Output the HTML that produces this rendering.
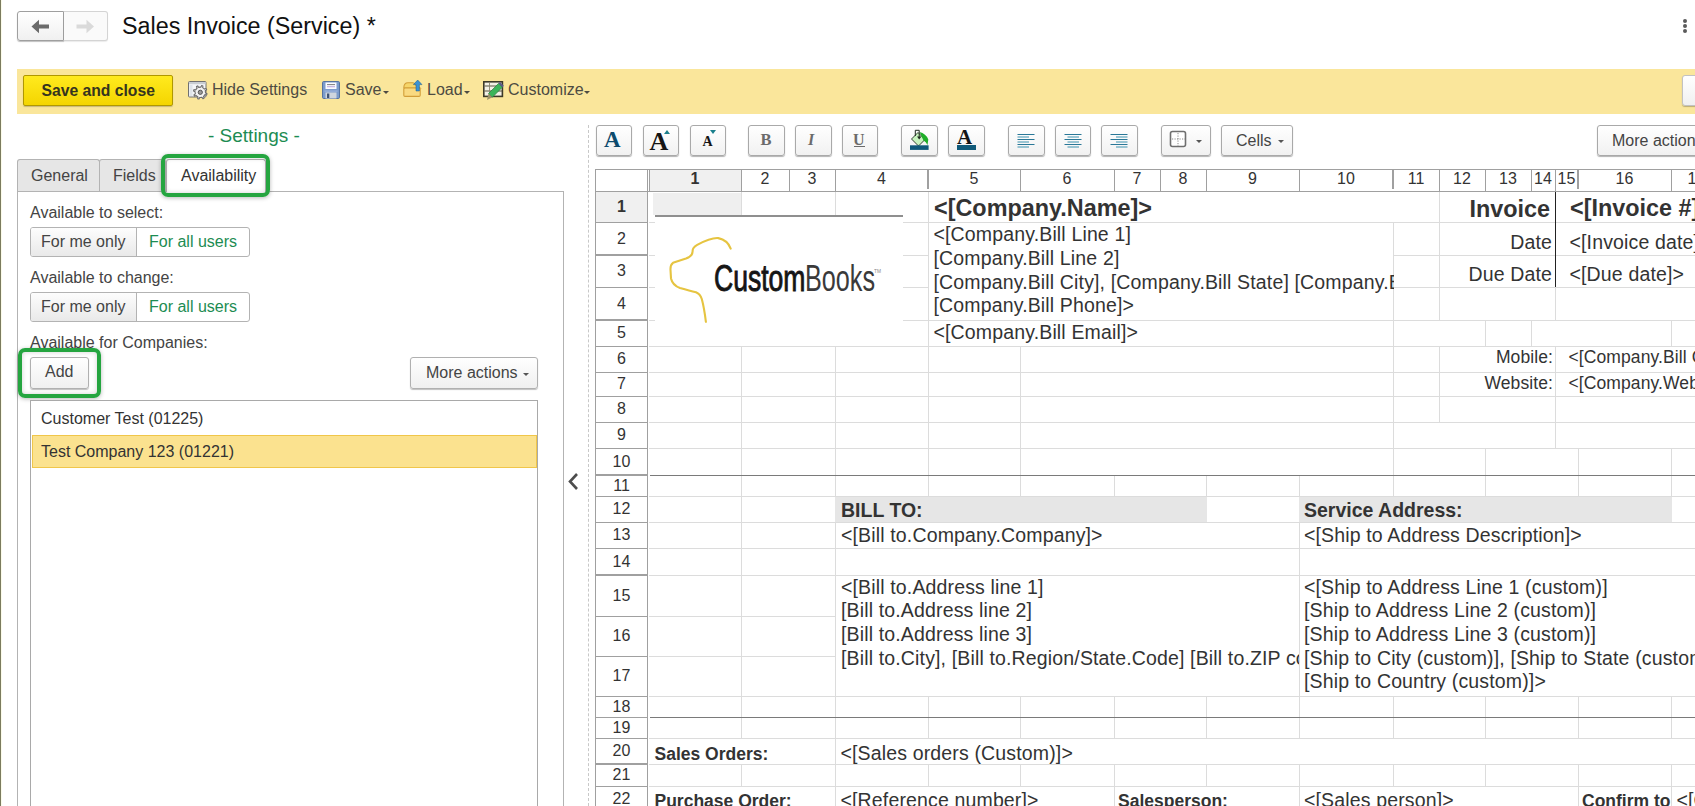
<!DOCTYPE html>
<html><head><meta charset="utf-8">
<style>
html,body{margin:0;padding:0;}
body{width:1695px;height:806px;overflow:hidden;position:relative;background:#fff;font-family:"Liberation Sans",sans-serif;color:#333;}
.a{position:absolute;}
.t{position:absolute;white-space:nowrap;}
.hn{font-size:16px;line-height:21px;text-align:center;color:#333;}
.rn{font-size:16px;text-align:center;color:#333;}
.btn{position:absolute;box-sizing:border-box;border:1px solid #b5b5b5;border-radius:3px;background:linear-gradient(#ffffff,#f0f0f0);box-shadow:0 1px 1px rgba(0,0,0,0.25);}
.tbtn{position:absolute;box-sizing:border-box;top:125px;height:31px;border:1px solid #a9a9a9;border-radius:3px;background:linear-gradient(#ffffff,#f1f1f1);box-shadow:0 1px 1px rgba(0,0,0,0.3);}
.caret{position:absolute;width:0;height:0;border-left:3px solid transparent;border-right:3px solid transparent;border-top:3px solid #555;}
.green{position:absolute;box-sizing:border-box;border:4px solid #25a540;border-radius:7px;box-shadow:0 1px 4px rgba(0,0,0,0.28), inset 0 0 5px rgba(0,0,0,0.18);}
</style></head>
<body>
<!-- left edge -->
<div class="a" style="left:0;top:0;width:1px;height:806px;background:#7b7b5e"></div>
<div class="a" style="left:1px;top:0;width:1px;height:806px;background:#fbfbe9"></div>

<!-- back/forward -->
<div class="btn" style="left:17px;top:11px;width:47px;height:30px;border-color:#9f9f9f;border-radius:3px 0 0 3px;"></div>
<div class="btn" style="left:64px;top:11px;width:44px;height:30px;border-color:#d4d4d4;border-left:none;border-radius:0 3px 3px 0;box-shadow:0 1px 1px rgba(0,0,0,0.08);background:#fafafa"></div>
<svg class="a" style="left:31px;top:19px" width="19" height="15" viewBox="0 0 19 15"><path d="M0.5,7.5 L8,0.8 L8,5.6 L18,5.6 L18,9.4 L8,9.4 L8,14.2 Z" fill="#6b6b6b"/></svg>
<svg class="a" style="left:76px;top:19px" width="19" height="15" viewBox="0 0 19 15"><path d="M18,7.5 L10.5,0.8 L10.5,5.6 L0.5,5.6 L0.5,9.4 L10.5,9.4 L10.5,14.2 Z" fill="#dadada"/></svg>
<div class="t" style="left:122px;top:12.5px;font-size:23.3px;line-height:27px;color:#111">Sales Invoice (Service) *</div>
<!-- kebab -->
<div class="a" style="left:1683px;top:19px;width:4px;height:4px;border-radius:50%;background:#5a5a5a"></div>
<div class="a" style="left:1683px;top:24px;width:4px;height:4px;border-radius:50%;background:#5a5a5a"></div>
<div class="a" style="left:1683px;top:29px;width:4px;height:4px;border-radius:50%;background:#5a5a5a"></div>

<!-- yellow command bar -->
<div class="a" style="left:17px;top:69px;width:1678px;height:45px;background:#fae69b"></div>
<div class="a" style="left:23px;top:75px;width:150px;height:31px;box-sizing:border-box;border:1px solid #b09800;border-radius:2px;background:linear-gradient(#ffea1e,#f4d500);box-shadow:0 1px 1px rgba(0,0,0,0.2)"></div>
<div class="t" style="left:41.5px;top:80.5px;font-size:15.7px;line-height:19px;font-weight:bold;color:#35341f">Save and close</div>
<!-- hide settings icon -->
<svg class="a" style="left:184px;top:76px" width="30" height="28" viewBox="184 76 30 28">
<rect x="188.5" y="81.5" width="17.5" height="15.5" rx="1" fill="#f4f6f8" stroke="#707070" stroke-width="1"/>
<rect x="189" y="82" width="16.5" height="2.2" fill="#c9ced3"/>
<rect x="189.5" y="85" width="3" height="11" fill="#dfe4ea"/>
<path d="M205.50,92.30 L205.46,92.91 L207.07,93.65 L206.67,94.94 L204.93,94.66 L203.98,95.98 L203.98,95.98 L203.52,96.38 L204.13,98.04 L202.94,98.67 L201.91,97.25 L200.30,97.50 L200.30,97.50 L199.69,97.46 L198.95,99.07 L197.66,98.67 L197.94,96.93 L196.62,95.98 L196.62,95.98 L196.22,95.52 L194.56,96.13 L193.93,94.94 L195.35,93.91 L195.10,92.30 L195.10,92.30 L195.14,91.69 L193.53,90.95 L193.93,89.66 L195.67,89.94 L196.62,88.62 L196.62,88.62 L197.08,88.22 L196.47,86.56 L197.66,85.93 L198.69,87.35 L200.30,87.10 L200.30,87.10 L200.91,87.14 L201.65,85.53 L202.94,85.93 L202.66,87.67 L203.98,88.62 L203.98,88.62 L204.38,89.08 L206.04,88.47 L206.67,89.66 L205.25,90.69 L205.50,92.30 Z" fill="#f2f2f2" stroke="#6c6c6c" stroke-width="1.1" stroke-linejoin="round"/>
<circle cx="200.3" cy="92.3" r="2.1" fill="#9a9a9a" stroke="#555" stroke-width="1"/>
</svg>
<div class="t" style="left:212px;top:80px;font-size:16px;line-height:19px;color:#4d4b42">Hide Settings</div>
<!-- save icon -->
<svg class="a" style="left:318px;top:76px" width="30" height="28" viewBox="318 76 30 28">
<rect x="322.5" y="81.5" width="17" height="17" rx="1.2" fill="#7b9bcb" stroke="#56739f" stroke-width="1"/>
<rect x="325.5" y="82.5" width="11" height="6.5" fill="#fbfcff"/>
<rect x="327" y="84.2" width="8" height="0.9" fill="#6d6d6d"/>
<rect x="327" y="86.3" width="8" height="0.9" fill="#b59ad6"/>
<rect x="324.5" y="90.5" width="13" height="1.2" fill="#9fb6de"/>
<rect x="325.5" y="92.5" width="11" height="6" fill="#cfd6de"/>
<rect x="327" y="93.5" width="2.3" height="4.5" fill="#3e5275"/>
</svg>
<div class="t" style="left:345px;top:80px;font-size:16px;line-height:19px;color:#4d4b42">Save</div>
<div class="caret" style="left:383px;top:91px;border-top-color:#4d4b42"></div>
<!-- load icon -->
<svg class="a" style="left:398px;top:74px" width="30" height="28" viewBox="398 74 30 28">
<path d="M403.8,88 Q403.8,82.8 408,82.8 L413,82.8 Q414.5,82.8 415.5,85 L420,88 Z" fill="#f6d66a" stroke="#d29e38" stroke-width="1.1"/>
<rect x="403.8" y="88" width="16.4" height="8.4" rx="1.2" fill="#f9da80" stroke="#d29e38" stroke-width="1.1"/>
<path d="M417.7,80 L422,84.6 L419.4,84.6 L419.4,91 L416,91 L416,84.6 L413.4,84.6 Z" fill="#3b93d4" stroke="#1f5a85" stroke-width="0.5"/>
</svg>
<div class="t" style="left:427px;top:80px;font-size:16px;line-height:19px;color:#4d4b42">Load</div>
<div class="caret" style="left:464px;top:91px;border-top-color:#4d4b42"></div>
<!-- customize icon -->
<svg class="a" style="left:479px;top:76px" width="30" height="28" viewBox="479 76 30 28">
<rect x="483.8" y="81.8" width="18.6" height="14.6" fill="#f3f1e6" stroke="#3d3a28" stroke-width="1.6"/>
<path d="M484.5,86h17.5M484.5,91h17.5" stroke="#5a5640" stroke-width="1.2"/>
<path d="M489.5,82.5v13.5" stroke="#8a8670" stroke-width="0.9"/>
<path d="M488.5,93.5 L498.5,83.5 L502.3,87.3 L492.3,97.3 Z" fill="#3cb45a" stroke="#2d7a3f" stroke-width="0.7"/>
<path d="M498.5,83.5 L500,82 L503.8,85.8 L502.3,87.3 Z" fill="#5b5a86"/>
<path d="M488.5,93.5 L487,100 L492.3,97.3 Z" fill="#9b916a"/>
</svg>
<div class="t" style="left:508px;top:80px;font-size:16px;line-height:19px;color:#4d4b42">Customize</div>
<div class="caret" style="left:584px;top:91px;border-top-color:#4d4b42"></div>
<!-- right button in bar -->
<div class="btn" style="left:1682px;top:75px;width:30px;height:31px;border-color:#c2c2c2"></div>

<!-- Settings heading -->
<div class="t" style="left:208px;top:125px;font-size:19px;line-height:21px;color:#1c8c52">- Settings -</div>

<!-- tabs -->
<div class="a" style="left:17px;top:191px;width:547px;height:615px;box-sizing:border-box;border:1px solid #b3b3b3;border-bottom:none;background:#fff"></div>
<div class="a" style="left:17px;top:159px;width:83px;height:32px;box-sizing:border-box;border:1px solid #b3b3b3;border-bottom:none;border-radius:3px 3px 0 0;background:#e6e6e6"></div>
<div class="a" style="left:99px;top:159px;width:67px;height:32px;box-sizing:border-box;border:1px solid #b3b3b3;border-bottom:none;border-radius:3px 3px 0 0;background:#e6e6e6"></div>
<div class="a" style="left:166px;top:159px;width:100px;height:33px;box-sizing:border-box;border:1px solid #b3b3b3;border-bottom:none;border-radius:3px 3px 0 0;background:#fff"></div>
<div class="t" style="left:31px;top:166px;font-size:16px;line-height:19px;color:#444">General</div>
<div class="t" style="left:113px;top:166px;font-size:16px;line-height:19px;color:#444">Fields</div>
<div class="t" style="left:181px;top:166px;font-size:16px;line-height:19px;color:#333">Availability</div>
<div class="green" style="left:161px;top:154px;width:109px;height:43px;"></div>

<!-- availability form -->
<div class="t" style="left:30px;top:203px;font-size:16px;line-height:19px;color:#444">Available to select:</div>
<div class="a" style="left:30px;top:227px;width:220px;height:30px;box-sizing:border-box;border:1px solid #b3b3b3;border-radius:3px;background:#fff;overflow:hidden">
  <div class="a" style="left:0;top:0;width:105px;height:28px;background:linear-gradient(#fdfdfd,#e9e9e9);border-right:1px solid #b3b3b3"></div>
</div>
<div class="t" style="left:41px;top:232px;font-size:16px;line-height:19px;color:#444">For me only</div>
<div class="t" style="left:149px;top:232px;font-size:16px;line-height:19px;color:#1c8c52">For all users</div>
<div class="t" style="left:30px;top:268px;font-size:16px;line-height:19px;color:#444">Available to change:</div>
<div class="a" style="left:30px;top:292px;width:220px;height:30px;box-sizing:border-box;border:1px solid #b3b3b3;border-radius:3px;background:#fff;overflow:hidden">
  <div class="a" style="left:0;top:0;width:105px;height:28px;background:linear-gradient(#fdfdfd,#e9e9e9);border-right:1px solid #b3b3b3"></div>
</div>
<div class="t" style="left:41px;top:297px;font-size:16px;line-height:19px;color:#444">For me only</div>
<div class="t" style="left:149px;top:297px;font-size:16px;line-height:19px;color:#1c8c52">For all users</div>
<div class="t" style="left:30px;top:333px;font-size:16px;line-height:19px;color:#444">Available for Companies:</div>
<div class="btn" style="left:30px;top:357px;width:59px;height:32px;border-color:#b0b0b0"></div>
<div class="t" style="left:45px;top:362px;font-size:16px;line-height:19px;color:#444">Add</div>
<div class="green" style="left:18px;top:348px;width:83px;height:50px;"></div>
<div class="btn" style="left:410px;top:357px;width:128px;height:32px;border-color:#b0b0b0"></div>
<div class="t" style="left:426px;top:363px;font-size:16px;line-height:19px;color:#444">More actions</div>
<div class="caret" style="left:523px;top:373px"></div>
<!-- list -->
<div class="a" style="left:30px;top:400px;width:508px;height:420px;box-sizing:border-box;border:1px solid #a9a9a9;background:#fff"></div>
<div class="t" style="left:41px;top:409px;font-size:16px;line-height:19px;color:#333">Customer Test (01225)</div>
<div class="a" style="left:32px;top:435px;width:505px;height:33px;box-sizing:border-box;border:1px solid #f0c64a;background:#fbe28f"></div>
<div class="t" style="left:41px;top:442px;font-size:16px;line-height:19px;color:#333">Test Company 123 (01221)</div>

<!-- splitter -->
<svg class="a" style="left:566px;top:471px" width="16" height="21" viewBox="0 0 16 21"><path d="M11,3 L4,10.5 L11,18" fill="none" stroke="#4d4d4d" stroke-width="2.6"/></svg>
<div class="a" style="left:588px;top:125px;width:0;height:681px;border-left:1px dashed #c8c8c8"></div>

<!-- spreadsheet toolbar -->
<div class="tbtn" style="left:596px;width:36px"></div>
<div class="t" style="left:604px;top:126px;font-family:'Liberation Serif',serif;font-weight:bold;font-size:23px;line-height:27px;color:#0d4b6e">A</div>
<div class="tbtn" style="left:643px;width:36px"></div>
<div class="t" style="left:649.5px;top:127px;font-family:'Liberation Serif',serif;font-weight:bold;font-size:26px;line-height:29px;color:#151515">A</div>
<div class="a" style="left:664px;top:130px;width:0;height:0;border-left:3px solid transparent;border-right:3px solid transparent;border-bottom:4px solid #1a7f8c"></div>
<div class="tbtn" style="left:690px;width:36px"></div>
<div class="t" style="left:702.5px;top:132.5px;font-family:'Liberation Serif',serif;font-weight:bold;font-size:14px;line-height:17px;color:#151515">A</div>
<div class="a" style="left:710px;top:130px;width:0;height:0;border-left:3.5px solid transparent;border-right:3.5px solid transparent;border-top:4px solid #1a7f8c"></div>

<div class="tbtn" style="left:748px;width:37px"></div>
<div class="t" style="left:760.5px;top:130px;font-family:'Liberation Serif',serif;font-weight:bold;font-size:16.5px;line-height:19px;color:#6b6b6b">B</div>
<div class="tbtn" style="left:795px;width:37px"></div>
<div class="t" style="left:808px;top:130px;font-family:'Liberation Serif',serif;font-weight:bold;font-style:italic;font-size:16px;line-height:19px;color:#6b6b6b">I</div>
<div class="tbtn" style="left:842px;width:36px"></div>
<div class="t" style="left:853px;top:130px;font-family:'Liberation Serif',serif;font-weight:bold;font-size:16px;line-height:19px;color:#6b6b6b">U</div>
<div class="a" style="left:854px;top:146px;width:11px;height:1px;background:#6b6b6b"></div>

<div class="tbtn" style="left:901px;width:37px"></div>
<svg class="a" style="left:900px;top:125px" width="40" height="31" viewBox="900 125 40 31">
<path d="M911.5,139 L918,132.5 L925,139.5 L918.5,146 Z" fill="#c6f3bd" stroke="#1e2a1e" stroke-width="0.9"/>
<path d="M919.5,132 Q926,133.5 928.3,139.5 L927.5,145 Q926,141.5 923.5,140.5 Z" fill="#1fae28"/>
<path d="M915.3,136 V130.3 H919.2 V138" fill="none" stroke="#1e2a1e" stroke-width="1"/>
<path d="M917,136.5 L921.4,136.5 L919.2,139.5 Z" fill="#1e2a1e"/>
<rect x="910" y="145.3" width="18.6" height="4.6" fill="#0f5a7a"/>
</svg>
<div class="tbtn" style="left:948px;width:37px"></div>
<div class="t" style="left:957px;top:125px;font-family:'Liberation Serif',serif;font-weight:bold;font-size:21px;line-height:24px;color:#151515">A</div>
<div class="a" style="left:957px;top:145px;width:19px;height:5px;background:#0f5a7a"></div>

<div class="tbtn" style="left:1008px;width:37px"></div>
<svg class="a" style="left:1016px;top:133px" width="20" height="15" viewBox="0 0 20 15">
<g stroke="#2a7898" stroke-width="1.1"><path d="M1.5,1.5h17M1.5,6.5h17M1.5,11.5h17"/><path d="M1.5,4h11.5M1.5,9h11.5M1.5,14h11.5" stroke="#3f93b0"/></g></svg>
<div class="tbtn" style="left:1055px;width:36px"></div>
<svg class="a" style="left:1063px;top:133px" width="20" height="15" viewBox="0 0 20 15">
<g stroke="#2a7898" stroke-width="1.1"><path d="M1.5,1.5h17M1.5,6.5h17M1.5,11.5h17"/><path d="M4.5,4h11.5M4.5,9h11.5M4.5,14h11.5" stroke="#3f93b0"/></g></svg>
<div class="tbtn" style="left:1101px;width:37px"></div>
<svg class="a" style="left:1109px;top:133px" width="20" height="15" viewBox="0 0 20 15">
<g stroke="#2a7898" stroke-width="1.1"><path d="M1.5,1.5h17M1.5,6.5h17M1.5,11.5h17"/><path d="M7,4h11.5M7,9h11.5M7,14h11.5" stroke="#3f93b0"/></g></svg>

<div class="tbtn" style="left:1161px;width:50px"></div>
<svg class="a" style="left:1169px;top:130px" width="19" height="19" viewBox="0 0 19 19">
<rect x="1.5" y="1.5" width="15" height="15" rx="2" fill="#fff" stroke="#6f6f6f" stroke-width="1.6"/>
<path d="M9,3v13M3,9h13" stroke="#8a8a8a" stroke-width="1" stroke-dasharray="1.2,1.3"/></svg>
<div class="caret" style="left:1196px;top:140px"></div>
<div class="tbtn" style="left:1221px;width:72px"></div>
<div class="t" style="left:1236px;top:131px;font-size:16px;line-height:19px;color:#444">Cells</div>
<div class="caret" style="left:1278px;top:140px"></div>

<div class="tbtn" style="left:1597px;width:120px"></div>
<div class="t" style="left:1612px;top:131px;font-size:16px;line-height:19px;color:#444">More actions</div>

<!-- spreadsheet -->
<div class="a" style="left:596px;top:170px;width:1099px;height:636px;background:#fff"></div>
<div style="position:absolute;left:741px;top:191px;width:1px;height:31px;background:#dcdcdc"></div>
<div style="position:absolute;left:835px;top:191px;width:1px;height:31px;background:#dcdcdc"></div>
<div style="position:absolute;left:928px;top:191px;width:1px;height:31px;background:#dcdcdc"></div>
<div style="position:absolute;left:1439px;top:191px;width:1px;height:31px;background:#dcdcdc"></div>
<div style="position:absolute;left:928px;top:222px;width:1px;height:33px;background:#dcdcdc"></div>
<div style="position:absolute;left:1393px;top:222px;width:1px;height:33px;background:#dcdcdc"></div>
<div style="position:absolute;left:1439px;top:222px;width:1px;height:33px;background:#dcdcdc"></div>
<div style="position:absolute;left:928px;top:255px;width:1px;height:32px;background:#dcdcdc"></div>
<div style="position:absolute;left:1393px;top:255px;width:1px;height:32px;background:#dcdcdc"></div>
<div style="position:absolute;left:1439px;top:255px;width:1px;height:32px;background:#dcdcdc"></div>
<div style="position:absolute;left:928px;top:287px;width:1px;height:33px;background:#dcdcdc"></div>
<div style="position:absolute;left:1393px;top:287px;width:1px;height:33px;background:#dcdcdc"></div>
<div style="position:absolute;left:1439px;top:287px;width:1px;height:33px;background:#dcdcdc"></div>
<div style="position:absolute;left:1555px;top:287px;width:1px;height:33px;background:#dcdcdc"></div>
<div style="position:absolute;left:928px;top:320px;width:1px;height:26px;background:#dcdcdc"></div>
<div style="position:absolute;left:1393px;top:320px;width:1px;height:26px;background:#dcdcdc"></div>
<div style="position:absolute;left:1485px;top:320px;width:1px;height:26px;background:#dcdcdc"></div>
<div style="position:absolute;left:1531px;top:320px;width:1px;height:26px;background:#dcdcdc"></div>
<div style="position:absolute;left:1671px;top:320px;width:1px;height:26px;background:#dcdcdc"></div>
<div style="position:absolute;left:741px;top:346px;width:1px;height:26px;background:#dcdcdc"></div>
<div style="position:absolute;left:835px;top:346px;width:1px;height:26px;background:#dcdcdc"></div>
<div style="position:absolute;left:928px;top:346px;width:1px;height:26px;background:#dcdcdc"></div>
<div style="position:absolute;left:1020px;top:346px;width:1px;height:26px;background:#dcdcdc"></div>
<div style="position:absolute;left:1393px;top:346px;width:1px;height:26px;background:#dcdcdc"></div>
<div style="position:absolute;left:1439px;top:346px;width:1px;height:26px;background:#dcdcdc"></div>
<div style="position:absolute;left:1555px;top:346px;width:1px;height:26px;background:#dcdcdc"></div>
<div style="position:absolute;left:741px;top:372px;width:1px;height:24px;background:#dcdcdc"></div>
<div style="position:absolute;left:835px;top:372px;width:1px;height:24px;background:#dcdcdc"></div>
<div style="position:absolute;left:928px;top:372px;width:1px;height:24px;background:#dcdcdc"></div>
<div style="position:absolute;left:1020px;top:372px;width:1px;height:24px;background:#dcdcdc"></div>
<div style="position:absolute;left:1393px;top:372px;width:1px;height:24px;background:#dcdcdc"></div>
<div style="position:absolute;left:1439px;top:372px;width:1px;height:24px;background:#dcdcdc"></div>
<div style="position:absolute;left:1555px;top:372px;width:1px;height:24px;background:#dcdcdc"></div>
<div style="position:absolute;left:741px;top:396px;width:1px;height:26px;background:#dcdcdc"></div>
<div style="position:absolute;left:835px;top:396px;width:1px;height:26px;background:#dcdcdc"></div>
<div style="position:absolute;left:928px;top:396px;width:1px;height:26px;background:#dcdcdc"></div>
<div style="position:absolute;left:1020px;top:396px;width:1px;height:26px;background:#dcdcdc"></div>
<div style="position:absolute;left:1393px;top:396px;width:1px;height:26px;background:#dcdcdc"></div>
<div style="position:absolute;left:1439px;top:396px;width:1px;height:26px;background:#dcdcdc"></div>
<div style="position:absolute;left:1555px;top:396px;width:1px;height:26px;background:#dcdcdc"></div>
<div style="position:absolute;left:741px;top:422px;width:1px;height:26px;background:#dcdcdc"></div>
<div style="position:absolute;left:835px;top:422px;width:1px;height:26px;background:#dcdcdc"></div>
<div style="position:absolute;left:928px;top:422px;width:1px;height:26px;background:#dcdcdc"></div>
<div style="position:absolute;left:1020px;top:422px;width:1px;height:26px;background:#dcdcdc"></div>
<div style="position:absolute;left:1393px;top:422px;width:1px;height:26px;background:#dcdcdc"></div>
<div style="position:absolute;left:1555px;top:422px;width:1px;height:26px;background:#dcdcdc"></div>
<div style="position:absolute;left:741px;top:448px;width:1px;height:27px;background:#dcdcdc"></div>
<div style="position:absolute;left:835px;top:448px;width:1px;height:27px;background:#dcdcdc"></div>
<div style="position:absolute;left:928px;top:448px;width:1px;height:27px;background:#dcdcdc"></div>
<div style="position:absolute;left:1020px;top:448px;width:1px;height:27px;background:#dcdcdc"></div>
<div style="position:absolute;left:1393px;top:448px;width:1px;height:27px;background:#dcdcdc"></div>
<div style="position:absolute;left:1485px;top:448px;width:1px;height:27px;background:#dcdcdc"></div>
<div style="position:absolute;left:1578px;top:448px;width:1px;height:27px;background:#dcdcdc"></div>
<div style="position:absolute;left:1671px;top:448px;width:1px;height:27px;background:#dcdcdc"></div>
<div style="position:absolute;left:741px;top:475px;width:1px;height:21px;background:#dcdcdc"></div>
<div style="position:absolute;left:835px;top:475px;width:1px;height:21px;background:#dcdcdc"></div>
<div style="position:absolute;left:928px;top:475px;width:1px;height:21px;background:#dcdcdc"></div>
<div style="position:absolute;left:1020px;top:475px;width:1px;height:21px;background:#dcdcdc"></div>
<div style="position:absolute;left:1114px;top:475px;width:1px;height:21px;background:#dcdcdc"></div>
<div style="position:absolute;left:1206px;top:475px;width:1px;height:21px;background:#dcdcdc"></div>
<div style="position:absolute;left:1299px;top:475px;width:1px;height:21px;background:#dcdcdc"></div>
<div style="position:absolute;left:1393px;top:475px;width:1px;height:21px;background:#dcdcdc"></div>
<div style="position:absolute;left:1485px;top:475px;width:1px;height:21px;background:#dcdcdc"></div>
<div style="position:absolute;left:1578px;top:475px;width:1px;height:21px;background:#dcdcdc"></div>
<div style="position:absolute;left:1671px;top:475px;width:1px;height:21px;background:#dcdcdc"></div>
<div style="position:absolute;left:741px;top:496px;width:1px;height:26px;background:#dcdcdc"></div>
<div style="position:absolute;left:835px;top:496px;width:1px;height:26px;background:#dcdcdc"></div>
<div style="position:absolute;left:1299px;top:496px;width:1px;height:26px;background:#dcdcdc"></div>
<div style="position:absolute;left:741px;top:522px;width:1px;height:26px;background:#dcdcdc"></div>
<div style="position:absolute;left:835px;top:522px;width:1px;height:26px;background:#dcdcdc"></div>
<div style="position:absolute;left:1299px;top:522px;width:1px;height:26px;background:#dcdcdc"></div>
<div style="position:absolute;left:741px;top:548px;width:1px;height:27px;background:#dcdcdc"></div>
<div style="position:absolute;left:835px;top:548px;width:1px;height:27px;background:#dcdcdc"></div>
<div style="position:absolute;left:1299px;top:548px;width:1px;height:27px;background:#dcdcdc"></div>
<div style="position:absolute;left:741px;top:575px;width:1px;height:41px;background:#dcdcdc"></div>
<div style="position:absolute;left:835px;top:575px;width:1px;height:41px;background:#dcdcdc"></div>
<div style="position:absolute;left:1299px;top:575px;width:1px;height:41px;background:#dcdcdc"></div>
<div style="position:absolute;left:741px;top:616px;width:1px;height:40px;background:#dcdcdc"></div>
<div style="position:absolute;left:835px;top:616px;width:1px;height:40px;background:#dcdcdc"></div>
<div style="position:absolute;left:1299px;top:616px;width:1px;height:40px;background:#dcdcdc"></div>
<div style="position:absolute;left:741px;top:656px;width:1px;height:40px;background:#dcdcdc"></div>
<div style="position:absolute;left:835px;top:656px;width:1px;height:40px;background:#dcdcdc"></div>
<div style="position:absolute;left:1299px;top:656px;width:1px;height:40px;background:#dcdcdc"></div>
<div style="position:absolute;left:741px;top:696px;width:1px;height:21px;background:#dcdcdc"></div>
<div style="position:absolute;left:835px;top:696px;width:1px;height:21px;background:#dcdcdc"></div>
<div style="position:absolute;left:928px;top:696px;width:1px;height:21px;background:#dcdcdc"></div>
<div style="position:absolute;left:1020px;top:696px;width:1px;height:21px;background:#dcdcdc"></div>
<div style="position:absolute;left:1114px;top:696px;width:1px;height:21px;background:#dcdcdc"></div>
<div style="position:absolute;left:1206px;top:696px;width:1px;height:21px;background:#dcdcdc"></div>
<div style="position:absolute;left:1299px;top:696px;width:1px;height:21px;background:#dcdcdc"></div>
<div style="position:absolute;left:1393px;top:696px;width:1px;height:21px;background:#dcdcdc"></div>
<div style="position:absolute;left:1485px;top:696px;width:1px;height:21px;background:#dcdcdc"></div>
<div style="position:absolute;left:1578px;top:696px;width:1px;height:21px;background:#dcdcdc"></div>
<div style="position:absolute;left:1671px;top:696px;width:1px;height:21px;background:#dcdcdc"></div>
<div style="position:absolute;left:741px;top:717px;width:1px;height:21px;background:#dcdcdc"></div>
<div style="position:absolute;left:835px;top:717px;width:1px;height:21px;background:#dcdcdc"></div>
<div style="position:absolute;left:928px;top:717px;width:1px;height:21px;background:#dcdcdc"></div>
<div style="position:absolute;left:1020px;top:717px;width:1px;height:21px;background:#dcdcdc"></div>
<div style="position:absolute;left:1114px;top:717px;width:1px;height:21px;background:#dcdcdc"></div>
<div style="position:absolute;left:1206px;top:717px;width:1px;height:21px;background:#dcdcdc"></div>
<div style="position:absolute;left:1299px;top:717px;width:1px;height:21px;background:#dcdcdc"></div>
<div style="position:absolute;left:1393px;top:717px;width:1px;height:21px;background:#dcdcdc"></div>
<div style="position:absolute;left:1485px;top:717px;width:1px;height:21px;background:#dcdcdc"></div>
<div style="position:absolute;left:1578px;top:717px;width:1px;height:21px;background:#dcdcdc"></div>
<div style="position:absolute;left:1671px;top:717px;width:1px;height:21px;background:#dcdcdc"></div>
<div style="position:absolute;left:835px;top:738px;width:1px;height:26px;background:#dcdcdc"></div>
<div style="position:absolute;left:741px;top:764px;width:1px;height:22px;background:#dcdcdc"></div>
<div style="position:absolute;left:835px;top:764px;width:1px;height:22px;background:#dcdcdc"></div>
<div style="position:absolute;left:928px;top:764px;width:1px;height:22px;background:#dcdcdc"></div>
<div style="position:absolute;left:1020px;top:764px;width:1px;height:22px;background:#dcdcdc"></div>
<div style="position:absolute;left:1114px;top:764px;width:1px;height:22px;background:#dcdcdc"></div>
<div style="position:absolute;left:1206px;top:764px;width:1px;height:22px;background:#dcdcdc"></div>
<div style="position:absolute;left:1299px;top:764px;width:1px;height:22px;background:#dcdcdc"></div>
<div style="position:absolute;left:1393px;top:764px;width:1px;height:22px;background:#dcdcdc"></div>
<div style="position:absolute;left:1485px;top:764px;width:1px;height:22px;background:#dcdcdc"></div>
<div style="position:absolute;left:1578px;top:764px;width:1px;height:22px;background:#dcdcdc"></div>
<div style="position:absolute;left:1671px;top:764px;width:1px;height:22px;background:#dcdcdc"></div>
<div style="position:absolute;left:835px;top:786px;width:1px;height:26px;background:#dcdcdc"></div>
<div style="position:absolute;left:1114px;top:786px;width:1px;height:26px;background:#dcdcdc"></div>
<div style="position:absolute;left:1299px;top:786px;width:1px;height:26px;background:#dcdcdc"></div>
<div style="position:absolute;left:1578px;top:786px;width:1px;height:26px;background:#dcdcdc"></div>
<div style="position:absolute;left:1671px;top:786px;width:1px;height:26px;background:#dcdcdc"></div>
<div style="position:absolute;left:649px;top:222px;width:1046px;height:1px;background:#dcdcdc"></div>
<div style="position:absolute;left:649px;top:255px;width:279px;height:1px;background:#dcdcdc"></div>
<div style="position:absolute;left:1393px;top:255px;width:302px;height:1px;background:#dcdcdc"></div>
<div style="position:absolute;left:649px;top:287px;width:279px;height:1px;background:#dcdcdc"></div>
<div style="position:absolute;left:1393px;top:287px;width:302px;height:1px;background:#dcdcdc"></div>
<div style="position:absolute;left:649px;top:320px;width:1046px;height:1px;background:#dcdcdc"></div>
<div style="position:absolute;left:649px;top:346px;width:1046px;height:1px;background:#dcdcdc"></div>
<div style="position:absolute;left:649px;top:372px;width:1046px;height:1px;background:#dcdcdc"></div>
<div style="position:absolute;left:649px;top:396px;width:1046px;height:1px;background:#dcdcdc"></div>
<div style="position:absolute;left:649px;top:422px;width:1046px;height:1px;background:#dcdcdc"></div>
<div style="position:absolute;left:649px;top:448px;width:1046px;height:1px;background:#dcdcdc"></div>
<div style="position:absolute;left:649px;top:496px;width:1046px;height:1px;background:#dcdcdc"></div>
<div style="position:absolute;left:649px;top:522px;width:1046px;height:1px;background:#dcdcdc"></div>
<div style="position:absolute;left:649px;top:548px;width:1046px;height:1px;background:#dcdcdc"></div>
<div style="position:absolute;left:649px;top:575px;width:1046px;height:1px;background:#dcdcdc"></div>
<div style="position:absolute;left:649px;top:616px;width:186px;height:1px;background:#dcdcdc"></div>
<div style="position:absolute;left:649px;top:656px;width:186px;height:1px;background:#dcdcdc"></div>
<div style="position:absolute;left:649px;top:696px;width:1046px;height:1px;background:#dcdcdc"></div>
<div style="position:absolute;left:649px;top:738px;width:1046px;height:1px;background:#dcdcdc"></div>
<div style="position:absolute;left:649px;top:764px;width:1046px;height:1px;background:#dcdcdc"></div>
<div style="position:absolute;left:649px;top:786px;width:1046px;height:1px;background:#dcdcdc"></div>
<div style="position:absolute;left:650px;top:475px;width:1045px;height:1px;background:#7a7a7a"></div>
<div style="position:absolute;left:650px;top:717px;width:1045px;height:1px;background:#7a7a7a"></div>
<div style="position:absolute;left:1555px;top:191px;width:1px;height:96px;background:#222"></div>
<div style="position:absolute;left:653px;top:193px;width:88px;height:22px;background:#efefef"></div>
<div style="position:absolute;left:655px;top:216px;width:248px;height:130px;background:#fff"></div>
<div style="position:absolute;left:655px;top:214.5px;width:248px;height:2px;background:#8f8f8f"></div>
<svg style="position:absolute;left:650px;top:230px" width="240" height="100" viewBox="650 230 240 100">
<path d="M730.7,248.6 Q727.5,240 718.3,238.1 Q711,237.5 697.2,244.9 Q692.3,247.5 692.6,251.5 Q692.6,256 686,258.6 L673,262.8 Q670.2,264.8 670.5,270 L671,278.4 Q672.5,285 680,288 Q690,290.8 696,292.2 Q700.2,294 701.8,299 Q704.2,308 705.9,321.8" fill="none" stroke="#e6c441" stroke-width="2.1" stroke-linecap="round" stroke-linejoin="round"/>
</svg>
<div class="t " style="left:713.8px;top:259px;font-size:36px;color:#151515;-webkit-text-stroke:0.9px #151515;transform:scaleX(0.737);transform-origin:0 0;line-height:40px">Custom</div>
<div class="t " style="left:805.4px;top:259px;font-size:36px;color:#3a3a3a;transform:scaleX(0.70);transform-origin:0 0;line-height:40px">Books</div>
<div class="t " style="left:873.5px;top:268px;font-size:6px;color:#888;line-height:7px;transform:scaleX(0.8);transform-origin:0 0">TM</div>
<div style="position:absolute;left:835px;top:497px;width:372px;height:25px;background:#e6e6e6"></div>
<div style="position:absolute;left:1299px;top:497px;width:373px;height:25px;background:#e6e6e6"></div>
<div class="t" style="left:934px;top:195.0px;line-height:26.9px;font-size:23.4px;font-weight:bold;color:#333;">&lt;[Company.Name]&gt;</div>
<div class="t" style="left:1400px;top:195.6px;line-height:26.9px;width:150px;text-align:right;font-size:23.4px;font-weight:bold;color:#333;">Invoice</div>
<div class="t" style="left:1570px;top:195.1px;line-height:26.9px;font-size:23.4px;font-weight:bold;color:#333;">&lt;[Invoice #]&gt;</div>
<div class="t" style="left:933.5px;top:223.2px;line-height:22.4px;font-size:19.5px;color:#333;letter-spacing:0.15px;">&lt;[Company.Bill Line 1]</div>
<div class="t" style="left:933.5px;top:246.8px;line-height:22.4px;font-size:19.5px;color:#333;letter-spacing:0.15px;">[Company.Bill Line 2]</div>
<div class="t" style="left:933.5px;top:270.5px;line-height:22.4px;width:460px;overflow:hidden;font-size:19.5px;color:#333;letter-spacing:0.15px;">[Company.Bill City], [Company.Bill State] [Company.Bill ZIP]</div>
<div class="t" style="left:933.5px;top:294.2px;line-height:22.4px;font-size:19.5px;color:#333;letter-spacing:0.15px;">[Company.Bill Phone]&gt;</div>
<div class="t" style="left:933.5px;top:320.5px;line-height:22.4px;font-size:19.5px;color:#333;letter-spacing:0.15px;">&lt;[Company.Bill Email]&gt;</div>
<div class="t" style="left:1432px;top:231.1px;line-height:22.4px;width:120px;text-align:right;font-size:19.5px;color:#333;letter-spacing:0.15px;">Date</div>
<div class="t" style="left:1432px;top:262.7px;line-height:22.4px;width:120px;text-align:right;font-size:19.5px;color:#333;letter-spacing:0.15px;">Due Date</div>
<div class="t" style="left:1569.5px;top:231.1px;line-height:22.4px;font-size:19.5px;color:#333;letter-spacing:0.15px;">&lt;[Invoice date]&gt;</div>
<div class="t" style="left:1569.5px;top:262.7px;line-height:22.4px;font-size:19.5px;color:#333;letter-spacing:0.15px;">&lt;[Due date]&gt;</div>
<div class="t" style="left:1433px;top:347.1px;line-height:20.1px;width:120px;text-align:right;font-size:17.5px;color:#333;letter-spacing:0.1px;">Mobile:</div>
<div class="t" style="left:1433px;top:372.6px;line-height:20.1px;width:120px;text-align:right;font-size:17.5px;color:#333;letter-spacing:0.1px;">Website:</div>
<div class="t" style="left:1568.5px;top:347.1px;line-height:20.1px;font-size:17.5px;color:#333;letter-spacing:0.1px;">&lt;[Company.Bill Cell Phone]&gt;</div>
<div class="t" style="left:1568.5px;top:372.6px;line-height:20.1px;font-size:17.5px;color:#333;letter-spacing:0.1px;">&lt;[Company.Website]&gt;</div>
<div class="t" style="left:841px;top:499.2px;line-height:22.4px;font-size:19.5px;font-weight:bold;color:#333;">BILL TO:</div>
<div class="t" style="left:1304px;top:499.2px;line-height:22.4px;font-size:19.5px;font-weight:bold;color:#333;">Service Address:</div>
<div class="t" style="left:841px;top:524.2px;line-height:22.4px;font-size:19.5px;color:#333;letter-spacing:0.15px;">&lt;[Bill to.Company.Company]&gt;</div>
<div class="t" style="left:1304px;top:524.2px;line-height:22.4px;font-size:19.5px;color:#333;letter-spacing:0.15px;">&lt;[Ship to Address Description]&gt;</div>
<div class="t" style="left:841px;top:575.5px;line-height:22.4px;font-size:19.5px;color:#333;letter-spacing:0.15px;">&lt;[Bill to.Address line 1]</div>
<div class="t" style="left:841px;top:599.2px;line-height:22.4px;font-size:19.5px;color:#333;letter-spacing:0.15px;">[Bill to.Address line 2]</div>
<div class="t" style="left:841px;top:622.9px;line-height:22.4px;font-size:19.5px;color:#333;letter-spacing:0.15px;">[Bill to.Address line 3]</div>
<div class="t" style="left:841px;top:646.6px;line-height:22.4px;width:458px;overflow:hidden;font-size:19.5px;color:#333;letter-spacing:0.15px;">[Bill to.City], [Bill to.Region/State.Code] [Bill to.ZIP code]</div>
<div class="t" style="left:1304px;top:575.5px;line-height:22.4px;font-size:19.5px;color:#333;letter-spacing:0.15px;">&lt;[Ship to Address Line 1 (custom)]</div>
<div class="t" style="left:1304px;top:599.2px;line-height:22.4px;font-size:19.5px;color:#333;letter-spacing:0.15px;">[Ship to Address Line 2 (custom)]</div>
<div class="t" style="left:1304px;top:622.9px;line-height:22.4px;font-size:19.5px;color:#333;letter-spacing:0.15px;">[Ship to Address Line 3 (custom)]</div>
<div class="t" style="left:1304px;top:646.6px;line-height:22.4px;font-size:19.5px;color:#333;letter-spacing:0.15px;">[Ship to City (custom)], [Ship to State (custom)] [Ship to ZIP (custom)]</div>
<div class="t" style="left:1304px;top:670.3px;line-height:22.4px;font-size:19.5px;color:#333;letter-spacing:0.15px;">[Ship to Country (custom)]&gt;</div>
<div class="t" style="left:654.5px;top:743.6px;line-height:20.1px;font-size:17.5px;font-weight:bold;color:#333;">Sales Orders:</div>
<div class="t" style="left:840.5px;top:741.6px;line-height:22.4px;font-size:19.5px;color:#333;letter-spacing:0.15px;">&lt;[Sales orders (Custom)]&gt;</div>
<div class="t" style="left:654.5px;top:790.7px;line-height:20.1px;font-size:17.5px;font-weight:bold;color:#333;">Purchase Order:</div>
<div class="t" style="left:840.5px;top:788.7px;line-height:22.4px;font-size:19.5px;color:#333;letter-spacing:0.15px;">&lt;[Reference number]&gt;</div>
<div class="t" style="left:1118px;top:790.7px;line-height:20.1px;font-size:17.5px;font-weight:bold;color:#333;">Salesperson:</div>
<div class="t" style="left:1304px;top:788.7px;line-height:22.4px;font-size:19.5px;color:#333;letter-spacing:0.15px;">&lt;[Sales person]&gt;</div>
<div class="t" style="left:1582px;top:790.7px;line-height:20.1px;font-size:17.5px;font-weight:bold;color:#333;">Confirm to</div>
<div class="t" style="left:1676.5px;top:788.7px;line-height:22.4px;font-size:19.5px;color:#333;letter-spacing:0.15px;">&lt;[Confirm to]&gt;</div>
<div style="position:absolute;left:595px;top:169px;width:1100px;height:1px;background:#a0a0a0"></div>
<div style="position:absolute;left:595px;top:191px;width:1100px;height:1px;background:#a0a0a0"></div>
<div style="position:absolute;left:595px;top:169px;width:1px;height:637px;background:#a0a0a0"></div>
<div style="position:absolute;left:647px;top:169px;width:1px;height:637px;background:#a0a0a0"></div>
<div style="position:absolute;left:649px;top:169px;width:1px;height:22px;background:#a0a0a0"></div>
<div style="position:absolute;left:650px;top:170px;width:91px;height:21px;background:#f0f0f0"></div>
<div style="position:absolute;left:596px;top:192px;width:51px;height:30px;background:#f0f0f0"></div>
<div style="position:absolute;left:741px;top:170px;width:1px;height:21px;background:#a0a0a0"></div>
<div style="position:absolute;left:789px;top:170px;width:1px;height:21px;background:#a0a0a0"></div>
<div style="position:absolute;left:835px;top:170px;width:1px;height:21px;background:#a0a0a0"></div>
<div style="position:absolute;left:927px;top:170px;width:2px;height:19px;background:#a0a0a0"></div>
<div style="position:absolute;left:1020px;top:170px;width:1px;height:21px;background:#a0a0a0"></div>
<div style="position:absolute;left:1114px;top:170px;width:1px;height:21px;background:#a0a0a0"></div>
<div style="position:absolute;left:1160px;top:170px;width:1px;height:21px;background:#a0a0a0"></div>
<div style="position:absolute;left:1206px;top:170px;width:1px;height:21px;background:#a0a0a0"></div>
<div style="position:absolute;left:1299px;top:170px;width:1px;height:21px;background:#a0a0a0"></div>
<div style="position:absolute;left:1392px;top:170px;width:2px;height:19px;background:#a0a0a0"></div>
<div style="position:absolute;left:1439px;top:170px;width:1px;height:21px;background:#a0a0a0"></div>
<div style="position:absolute;left:1485px;top:170px;width:1px;height:21px;background:#a0a0a0"></div>
<div style="position:absolute;left:1531px;top:170px;width:1px;height:21px;background:#a0a0a0"></div>
<div style="position:absolute;left:1555px;top:170px;width:1px;height:21px;background:#a0a0a0"></div>
<div style="position:absolute;left:1577px;top:170px;width:2px;height:19px;background:#a0a0a0"></div>
<div style="position:absolute;left:1671px;top:170px;width:1px;height:21px;background:#a0a0a0"></div>
<div class="t hn" style="left:649px;top:168px;width:92px;font-weight:bold">1</div>
<div class="t hn" style="left:741px;top:168px;width:48px;font-weight:normal">2</div>
<div class="t hn" style="left:789px;top:168px;width:46px;font-weight:normal">3</div>
<div class="t hn" style="left:835px;top:168px;width:93px;font-weight:normal">4</div>
<div class="t hn" style="left:928px;top:168px;width:92px;font-weight:normal">5</div>
<div class="t hn" style="left:1020px;top:168px;width:94px;font-weight:normal">6</div>
<div class="t hn" style="left:1114px;top:168px;width:46px;font-weight:normal">7</div>
<div class="t hn" style="left:1160px;top:168px;width:46px;font-weight:normal">8</div>
<div class="t hn" style="left:1206px;top:168px;width:93px;font-weight:normal">9</div>
<div class="t hn" style="left:1299px;top:168px;width:94px;font-weight:normal">10</div>
<div class="t hn" style="left:1393px;top:168px;width:46px;font-weight:normal">11</div>
<div class="t hn" style="left:1439px;top:168px;width:46px;font-weight:normal">12</div>
<div class="t hn" style="left:1485px;top:168px;width:46px;font-weight:normal">13</div>
<div class="t hn" style="left:1531px;top:168px;width:24px;font-weight:normal">14</div>
<div class="t hn" style="left:1555px;top:168px;width:23px;font-weight:normal">15</div>
<div class="t hn" style="left:1578px;top:168px;width:93px;font-weight:normal">16</div>
<div class="t hn" style="left:1671px;top:168px;width:51px">17</div>
<div style="position:absolute;left:596px;top:222px;width:51px;height:1px;background:#a0a0a0"></div>
<div class="t rn" style="left:596px;top:191px;width:51px;height:31px;line-height:31px;font-weight:bold">1</div>
<div style="position:absolute;left:596px;top:254px;width:51px;height:2px;background:#a0a0a0"></div>
<div class="t rn" style="left:596px;top:222px;width:51px;height:33px;line-height:33px;font-weight:normal">2</div>
<div style="position:absolute;left:596px;top:287px;width:51px;height:1px;background:#a0a0a0"></div>
<div class="t rn" style="left:596px;top:255px;width:51px;height:32px;line-height:32px;font-weight:normal">3</div>
<div style="position:absolute;left:596px;top:319px;width:51px;height:2px;background:#a0a0a0"></div>
<div class="t rn" style="left:596px;top:287px;width:51px;height:33px;line-height:33px;font-weight:normal">4</div>
<div style="position:absolute;left:596px;top:346px;width:51px;height:1px;background:#a0a0a0"></div>
<div class="t rn" style="left:596px;top:320px;width:51px;height:26px;line-height:26px;font-weight:normal">5</div>
<div style="position:absolute;left:596px;top:372px;width:51px;height:1px;background:#a0a0a0"></div>
<div class="t rn" style="left:596px;top:346px;width:51px;height:26px;line-height:26px;font-weight:normal">6</div>
<div style="position:absolute;left:596px;top:396px;width:51px;height:1px;background:#a0a0a0"></div>
<div class="t rn" style="left:596px;top:372px;width:51px;height:24px;line-height:24px;font-weight:normal">7</div>
<div style="position:absolute;left:596px;top:422px;width:51px;height:1px;background:#a0a0a0"></div>
<div class="t rn" style="left:596px;top:396px;width:51px;height:26px;line-height:26px;font-weight:normal">8</div>
<div style="position:absolute;left:596px;top:448px;width:51px;height:1px;background:#a0a0a0"></div>
<div class="t rn" style="left:596px;top:422px;width:51px;height:26px;line-height:26px;font-weight:normal">9</div>
<div style="position:absolute;left:596px;top:474px;width:51px;height:2px;background:#a0a0a0"></div>
<div class="t rn" style="left:596px;top:448px;width:51px;height:27px;line-height:27px;font-weight:normal">10</div>
<div style="position:absolute;left:596px;top:496px;width:51px;height:1px;background:#a0a0a0"></div>
<div class="t rn" style="left:596px;top:475px;width:51px;height:21px;line-height:21px;font-weight:normal">11</div>
<div style="position:absolute;left:596px;top:522px;width:51px;height:1px;background:#a0a0a0"></div>
<div class="t rn" style="left:596px;top:496px;width:51px;height:26px;line-height:26px;font-weight:normal">12</div>
<div style="position:absolute;left:596px;top:548px;width:51px;height:1px;background:#a0a0a0"></div>
<div class="t rn" style="left:596px;top:522px;width:51px;height:26px;line-height:26px;font-weight:normal">13</div>
<div style="position:absolute;left:596px;top:574px;width:51px;height:2px;background:#a0a0a0"></div>
<div class="t rn" style="left:596px;top:548px;width:51px;height:27px;line-height:27px;font-weight:normal">14</div>
<div style="position:absolute;left:596px;top:616px;width:51px;height:1px;background:#a0a0a0"></div>
<div class="t rn" style="left:596px;top:575px;width:51px;height:41px;line-height:41px;font-weight:normal">15</div>
<div style="position:absolute;left:596px;top:656px;width:51px;height:1px;background:#a0a0a0"></div>
<div class="t rn" style="left:596px;top:616px;width:51px;height:40px;line-height:40px;font-weight:normal">16</div>
<div style="position:absolute;left:596px;top:696px;width:51px;height:1px;background:#a0a0a0"></div>
<div class="t rn" style="left:596px;top:656px;width:51px;height:40px;line-height:40px;font-weight:normal">17</div>
<div style="position:absolute;left:596px;top:717px;width:51px;height:1px;background:#a0a0a0"></div>
<div class="t rn" style="left:596px;top:696px;width:51px;height:21px;line-height:21px;font-weight:normal">18</div>
<div style="position:absolute;left:596px;top:738px;width:51px;height:1px;background:#a0a0a0"></div>
<div class="t rn" style="left:596px;top:717px;width:51px;height:21px;line-height:21px;font-weight:normal">19</div>
<div style="position:absolute;left:596px;top:763px;width:51px;height:2px;background:#a0a0a0"></div>
<div class="t rn" style="left:596px;top:738px;width:51px;height:26px;line-height:26px;font-weight:normal">20</div>
<div style="position:absolute;left:596px;top:786px;width:51px;height:1px;background:#a0a0a0"></div>
<div class="t rn" style="left:596px;top:764px;width:51px;height:22px;line-height:22px;font-weight:normal">21</div>
<div class="t rn" style="left:596px;top:786px;width:51px;height:26px;line-height:26px;font-weight:normal">22</div>
</body></html>
